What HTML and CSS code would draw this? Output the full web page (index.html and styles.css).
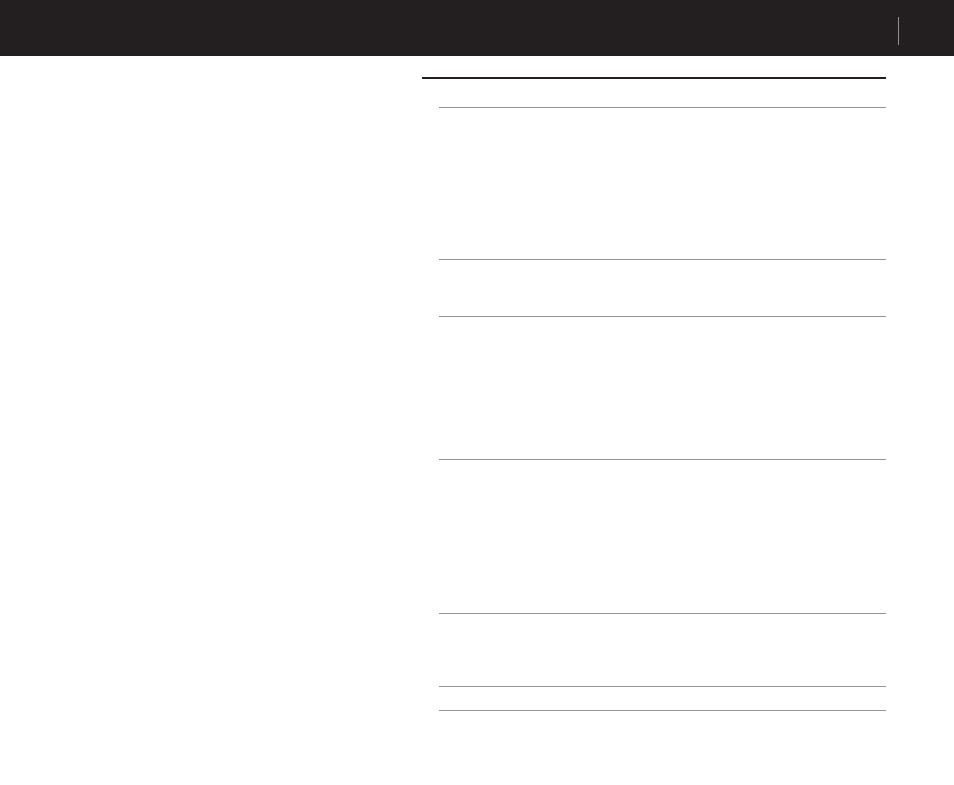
FILE: index.html
```html
<!DOCTYPE html>
<html>
<head>
  <title>Document</title>
  <meta charset="UTF-8">
  <meta name="viewport" content="width=device-width, initial-scale=1.0">
  <link rel="stylesheet" href="styles.css">
</head>
<body>
<header class="topbar">
  <span class="topbar-divider"></span>
</header>

<main class="layout">
  <div class="side"></div>
  <section class="content">
    <ul class="rows">
      <li class="row row-tall"></li>
      <li class="row row-short"></li>
      <li class="row row-mid"></li>
      <li class="row row-taller"></li>
      <li class="row row-small"></li>
      <li class="row row-tiny"></li>
    </ul>
  </section>
</main>
</body>
</html>
```

FILE: styles.css
```css
* {
  box-sizing: border-box;
}

body {
  margin: 0;
  background-color: #ffffff;
  font-family: "Liberation Sans", Arial, sans-serif;
}

.topbar {
  display: flex;
  justify-content: flex-end;
  align-items: flex-start;
  height: 56px;
  padding-top: 17px;
  padding-right: 55px;
  background-color: #231f20;
}

.topbar-divider {
  display: block;
  width: 1px;
  height: 28px;
  background-color: #8f8d8e;
}

.layout {
  display: grid;
  grid-template-columns: 422px 464px;
  padding-top: 21px;
}

.content {
  border-top: 2px solid #231f20;
  padding-top: 28px;
}

.rows {
  list-style: none;
  margin: 0 0 0 17px;
  padding: 0;
  border-bottom: 1px solid #939393;
}

.row {
  border-top: 1px solid #939393;
}

.row-tall {
  height: 152px;
}

.row-short {
  height: 57px;
}

.row-mid {
  height: 143px;
}

.row-taller {
  height: 154px;
}

.row-small {
  height: 73px;
}

.row-tiny {
  height: 24px;
}
```
